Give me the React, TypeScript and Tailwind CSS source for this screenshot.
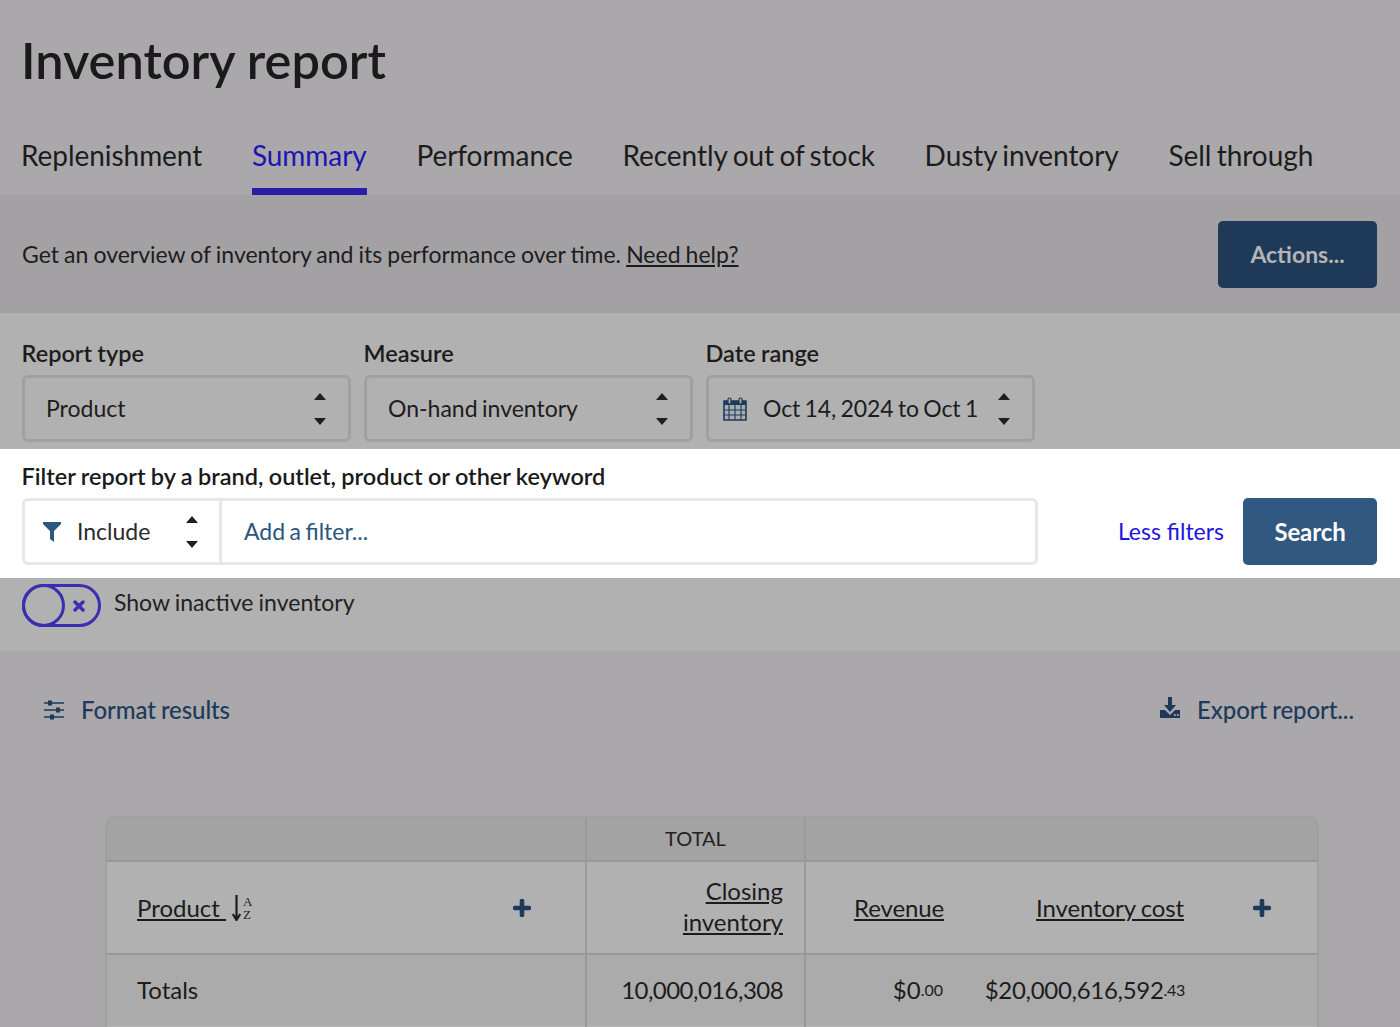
import React from "react";

const Carets = ({ className = "" }: { className?: string }) => (
  <svg width="14" height="34" viewBox="0 0 14 34" className={className} aria-hidden="true">
    <path d="M7 1 L13 8 H1 Z M7 33 L1 26 H13 Z" fill="#1f1f1f" />
  </svg>
);

const Plus = () => (
  <svg width="18" height="18" viewBox="0 0 18 18" aria-hidden="true">
    <path d="M9 2V16M2 9H16" stroke="#1d3a5a" strokeWidth="4.6" strokeLinecap="round" />
  </svg>
);

const tabs = ["Replenishment", "Summary", "Performance", "Recently out of stock", "Dusty inventory", "Sell through"];

const Select = ({ w, children, pad }: { w: string; children: React.ReactNode; pad: string }) => (
  <div className={`${w} ${pad} h-[67px] border-[3px] border-[#a0a0a0] rounded-[6px] flex items-center justify-between text-[23px] [word-spacing:-1.4px] text-[#1c1c1c]`}>
    {children}
  </div>
);

const labelCls = "-ml-[0.5px] text-[23.5px] leading-[32px] font-semibold [word-spacing:-0.6px] mb-[6px]";

export default function App() {
  return (
    <div className="w-[1400px] h-[1027px] overflow-hidden bg-[#aaa8ab] text-[#1c1c1c] font-['Lato','Noto_Sans',sans-serif]">
      <header className="h-[195px] px-[21px] flex flex-col">
        <h1 className="mt-[30px] text-[50.5px] leading-[60px] font-semibold text-[#1a1a1a]">Inventory report</h1>
        <nav className="mt-auto flex gap-[49.7px] text-[28px] tracking-[-0.05px] [word-spacing:-1.7px]">
          {tabs.map((t) => (
            <span
              key={t}
              className={
                t === "Summary"
                  ? "h-[74px] pt-[14px] leading-[40px] text-[#1c14b4] border-b-[7px] border-[#2a1ea8]"
                  : "h-[74px] pt-[14px] leading-[40px]"
              }
            >
              {t}
            </span>
          ))}
        </nav>
      </header>

      <section className="h-[118px] bg-[#a3a1a4] pl-[22px] pr-[23px] flex items-center justify-between">
        <p className="text-[23px] [word-spacing:-0.8px]">
          Get an overview of inventory and its performance over time. <span className="underline">Need help?</span>
        </p>
        <button className="w-[159px] h-[67px] rounded-[5px] bg-[#1f3a58] text-[#b5b5b5] text-[23px] font-bold">Actions...</button>
      </section>

      <section className="h-[136px] bg-[#b1b1b1] px-[22px] pt-[24px] flex gap-[13px]">
        <div className="flex flex-col">
          <label className={labelCls}>Report type</label>
          <Select w="w-[329px]" pad="pl-[21px] pr-[21px]">
            <span>Product</span>
            <Carets />
          </Select>
        </div>
        <div className="flex flex-col">
          <label className={labelCls}>Measure</label>
          <Select w="w-[329px]" pad="pl-[21px] pr-[21px]">
            <span>On-hand inventory</span>
            <Carets />
          </Select>
        </div>
        <div className="flex flex-col">
          <label className={labelCls}>Date range</label>
          <Select w="w-[329px]" pad="pl-[14px] pr-[21px]">
            <svg width="24" height="24" viewBox="0 0 24 24" aria-hidden="true" className="mr-[16px] shrink-0">
              <path d="M1 4H23V23H1Z" fill="#a9adb2" stroke="#1d3a5a" strokeWidth="1.6" />
              <path d="M1 4H23V8H1Z" fill="#1d3a5a" />
              <path d="M1 13H23 M1 18H23 M6 8V23 M12 8V23 M18 8V23" stroke="#1d3a5a" strokeWidth="1.1" fill="none" />
              <rect x="5" y="1" width="3" height="6" rx="1.5" fill="#b1b1b1" stroke="#1d3a5a" strokeWidth="1.2" />
              <rect x="16" y="1" width="3" height="6" rx="1.5" fill="#b1b1b1" stroke="#1d3a5a" strokeWidth="1.2" />
            </svg>
            <span className="flex-1 whitespace-nowrap tracking-[-0.1px]">Oct 14, 2024 to Oct 1</span>
            <Carets />
          </Select>
        </div>
      </section>

      <section className="h-[129px] bg-white pl-[22px] pr-[23px] pt-[11px]">
        <label className="block -ml-[0.5px] text-[23.5px] leading-[32px] font-semibold [word-spacing:-0.5px] text-[#1a1a1a] mb-[6px]">
          Filter report by a brand, outlet, product or other keyword
        </label>
        <div className="flex items-center">
          <div className="w-[1016px] h-[67px] border-[3px] border-[#e7e7e7] rounded-[6px] flex items-center text-[23px] [word-spacing:-1.4px]">
            <div className="w-[197px] h-full border-r-[3px] border-[#e7e7e7] pl-[18px] pr-[20px] flex items-center shrink-0">
              <svg width="18" height="20" viewBox="0 0 18 20" aria-hidden="true" className="mr-[16px]">
                <path d="M0 0H18V2L11 9V20L7 17V9L0 2Z" fill="#2c5580" />
              </svg>
              <span className="flex-1 text-[#2b2b2b]">Include</span>
              <Carets />
            </div>
            <span className="ml-[22px] text-[#2c5580]">Add a filter...</span>
          </div>
          <span className="ml-auto mr-[19px] text-[23px] text-[#1f14e0]">Less filters</span>
          <button className="w-[134px] h-[67px] rounded-[5px] bg-[#315880] text-white text-[24px] font-bold tracking-[-0.1px]">Search</button>
        </div>
      </section>

      <section className="h-[73px] bg-[#b1b1b1] px-[22px] pt-[6px] flex items-start">
        <div className="relative w-[79px] h-[43px] rounded-full border-[3px] border-[#3a2fb0] mr-[13px] shrink-0">
          <div className="absolute left-[-3px] top-[-3px] w-[43px] h-[43px] rounded-full border-[3px] border-[#3a2fb0]" />
          <svg width="12" height="12" viewBox="0 0 12 12" aria-hidden="true" className="absolute right-[13px] top-[13px]">
            <path d="M2 2L10 10M10 2L2 10" stroke="#3a2fb0" strokeWidth="3.4" strokeLinecap="round" />
          </svg>
        </div>
        <span className="text-[23px] leading-[37px] [word-spacing:-0.7px] text-[#222]">Show inactive inventory</span>
      </section>

      <section className="pl-[44px] pr-[46px] pt-[42px] h-[165px] flex justify-between items-start text-[24px] font-medium tracking-[-0.1px] [word-spacing:-0.8px] text-[#1d3a5a]">
        <div className="flex items-center leading-[34px]">
          <svg width="20" height="20" viewBox="0 0 20 20" aria-hidden="true" className="mr-[17px]">
            <path d="M0 3H20M0 10H20M0 17H20" stroke="#1d3a5a" strokeWidth="1.6" />
            <rect x="4" y="0.5" width="4" height="5" fill="#1d3a5a" />
            <rect x="12" y="7.5" width="4" height="5" fill="#1d3a5a" />
            <rect x="6" y="14.5" width="4" height="5" fill="#1d3a5a" />
          </svg>
          <span>Format results</span>
        </div>
        <div className="flex items-center leading-[34px]">
          <svg width="22" height="22" viewBox="0 0 22 22" aria-hidden="true" className="mr-[16px] -mt-[4px]">
            <path d="M9 0H13V8H17L11 15L5 8H9Z" fill="#1d3a5a" />
            <path d="M1 13H6L11 18L16 13H21V21H1Z" fill="#1d3a5a" />
            <rect x="15" y="17" width="1.6" height="2" fill="#aaa8ab" />
            <rect x="18" y="17" width="1.6" height="2" fill="#aaa8ab" />
          </svg>
          <span>Export report...</span>
        </div>
      </section>

      <div className="ml-[105px] w-[1214px] border-2 border-b-0 border-[#a0a0a0] rounded-t-[10px] overflow-hidden grid grid-cols-[478px_221px_1fr] text-[24px]">
        <div className="h-[44px] bg-[#a3a3a3] border-b-2 border-[#999]" />
        <div className="h-[44px] bg-[#a3a3a3] border-b-2 border-x-2 border-[#999] flex items-center justify-center text-[20px] pb-[2px] text-[#222]">TOTAL</div>
        <div className="h-[44px] bg-[#a3a3a3] border-b-2 border-[#999]" />

        <div className="h-[93px] bg-[#b1b1b1] border-b-2 border-[#999] pl-[30px] pr-[54px] flex items-center justify-between">
          <div className="flex items-center">
            <span className="underline">Product&nbsp;</span>
            <svg width="9" height="26" viewBox="0 0 9 26" aria-hidden="true" className="ml-[6px]">
              <path d="M4.5 0V24M0.8 19L4.5 25L8.2 19" stroke="#1c1c1c" strokeWidth="2.2" fill="none" />
            </svg>
            <span className="ml-[2px] flex flex-col text-[13px] leading-[13px] font-['Liberation_Serif',serif] text-[#222]">
              <span>A</span>
              <span>Z</span>
            </span>
          </div>
          <Plus />
        </div>
        <div className="h-[93px] bg-[#b1b1b1] border-b-2 border-x-2 border-[#999] pr-[21px] pb-[3px] flex items-center justify-end text-right leading-[31px]">
          <span className="underline">
            Closing
            <br />
            inventory
          </span>
        </div>
        <div className="h-[93px] bg-[#b1b1b1] border-b-2 border-[#999] pl-[48px] pr-[46px] flex items-center tracking-[-0.1px] [word-spacing:-0.8px]">
          <span className="underline w-[182px]">Revenue</span>
          <span className="underline">Inventory cost</span>
          <span className="ml-auto"><Plus /></span>
        </div>

        <div className="h-[70px] bg-[#ababab] pl-[30px] flex items-center">Totals</div>
        <div className="h-[70px] bg-[#ababab] border-x-2 border-[#999] pr-[21px] flex items-center justify-end tracking-[-0.55px]">10,000,016,308</div>
        <div className="h-[70px] bg-[#ababab] flex items-center">
          <span className="w-[137px] text-right">
            $0<span className="text-[16px] align-[3px]">.00</span>
          </span>
          <span className="w-[242px] text-right tracking-[-0.3px]">
            $20,000,616,592<span className="text-[16px] align-[3px]">.43</span>
          </span>
        </div>
        <div className="h-[10px] bg-[#b1b1b1]" />
        <div className="h-[10px] bg-[#b1b1b1] border-x-2 border-[#999]" />
        <div className="h-[10px] bg-[#b1b1b1]" />
      </div>
    </div>
  );
}
